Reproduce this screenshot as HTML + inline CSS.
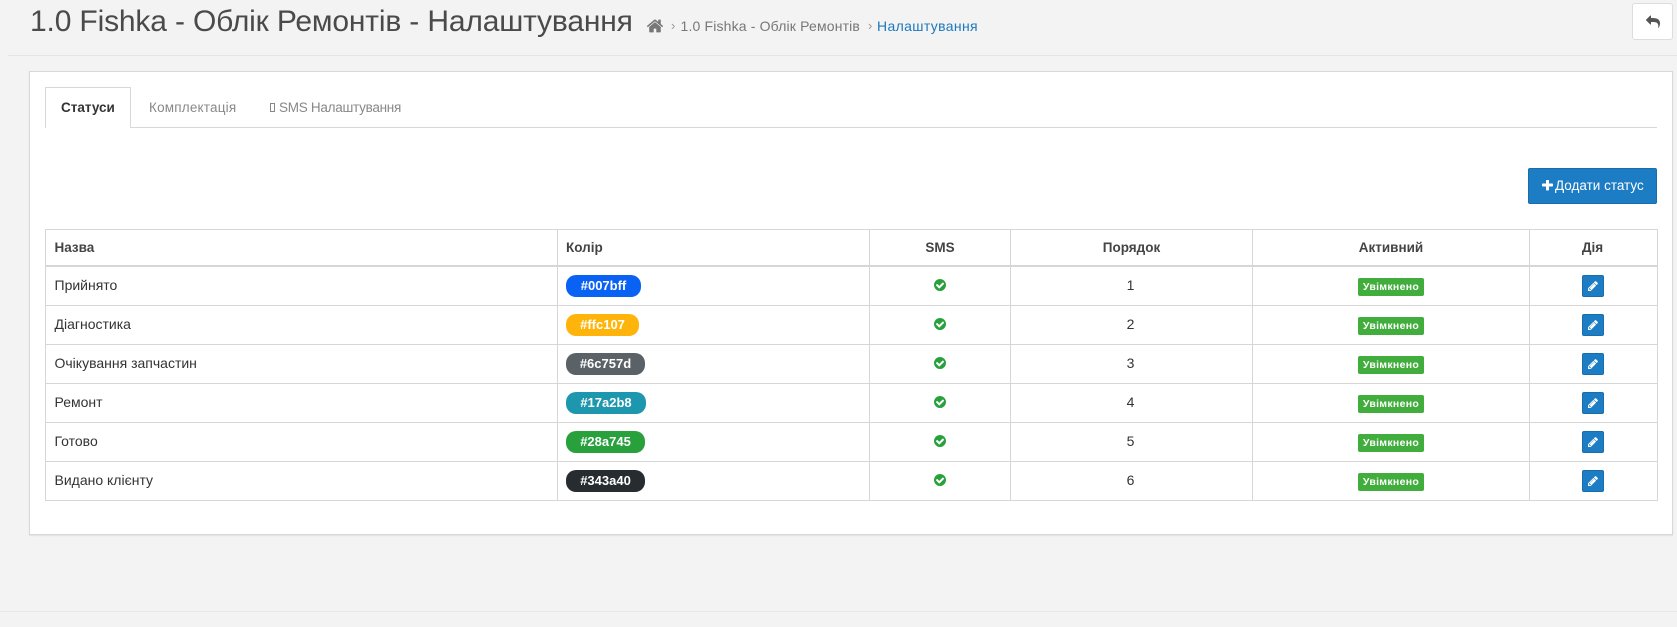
<!DOCTYPE html>
<html lang="uk"><head><meta charset="utf-8"><title>Налаштування</title>
<style>
*{box-sizing:border-box}
html,body{margin:0;padding:0}
body{width:1677px;height:627px;overflow:hidden;background:#f3f3f3;position:relative;font-family:"Liberation Sans","DejaVu Sans",sans-serif;color:#333;font-size:14px}
.a{position:absolute;white-space:nowrap}
.hl{position:absolute;left:8px;right:0;top:55px;height:1px;background:#e4e4e4}
.fl{position:absolute;left:0;right:0;top:611px;height:1px;background:#e8e8e8}
h1{margin:0;font-weight:400;font-size:30px;line-height:36px;left:30px;top:4px;color:#4a4a4a;letter-spacing:-.16px}
.bc{font-size:14px;line-height:18px;top:17px;color:#777}
.sep{color:#999;font-size:13px}
.back{left:1632px;top:3px;width:41px;height:37px;background:#fff;border:1px solid #ddd;border-radius:3px}
.card{left:29px;top:71px;width:1644px;height:464px;background:#fff;border:1px solid #d8d8d8;box-shadow:0 1px 1px rgba(0,0,0,.08)}
.tabline{left:45px;top:127px;width:1612px;height:1px;background:#d8d8d8}
.tab{left:45px;top:87px;width:86px;height:41px;background:#fff;border:1px solid #d8d8d8;border-bottom:0}
.tt{font-size:13.5px;line-height:18px;top:98.5px;color:#888}
.add{left:1528px;top:168px;width:129px;height:36px;background:#1c7cc4;border:1px solid #1a6dab;border-radius:2px;color:#fff;font-size:13.5px;line-height:34px;padding-left:26px}
table{position:absolute;left:45px;top:229px;width:1612px;border-collapse:collapse;table-layout:fixed;background:#fff}
th,td{border:1px solid #d6d6d6;padding:0 0 2px 8px;font-size:14px;text-align:left;height:39px;color:#333;white-space:nowrap}
td:first-child,th:first-child{padding-left:8.5px}
th,th.c{height:36px;font-size:13.5px;font-weight:700;border-bottom:2px solid #d6d6d6;color:#444;padding-bottom:0}
tr:nth-child(2) td{height:40px}
td.c,th.c{text-align:center;padding-left:0}
td.c{padding-bottom:2px}
td.n{padding-right:2px}
td.l,th.l{padding-right:2px}
.pill{display:inline-block;height:22px;line-height:21px;border-radius:10px;color:#fff;font-weight:700;font-size:13px;text-align:center;vertical-align:middle;position:relative;top:1px}
.badge{display:inline-block;width:66px;height:18px;line-height:18px;background:#41ad3c;color:#fff;font-weight:700;font-size:10.5px;border-radius:2px;letter-spacing:.3px;vertical-align:middle;position:relative;top:2px}
.btn{display:inline-flex;align-items:center;justify-content:center;width:22px;height:22px;background:#1c7cc4;border:1px solid #1a6dab;border-radius:2px;vertical-align:middle;position:relative;top:1px}
svg{display:block;fill:currentColor}
.ck{display:inline-block;color:#28a03c;vertical-align:middle;position:relative;top:-1px}
</style></head><body>
<svg width="0" height="0" style="position:absolute"><defs>
<symbol id="check" viewBox="128 128 1536 1536"><path d="M1412 734q0-28-18-46l-91-90q-19-19-45-19t-45 19l-408 407-226-226q-19-19-45-19t-45 19l-91 90q-18 18-18 46 0 27 18 45l362 362q19 19 45 19 27 0 46-19l543-543q18-18 18-45zm252 162q0 209-103 385.5t-279.5 279.5-385.5 103-385.5-103-279.5-279.5-103-385.5 103-385.5 279.5-279.5 385.5-103 385.5 103 279.5 279.5 103 385.5z"/></symbol>
<symbol id="pencil" viewBox="128 128 1536 1536"><path d="M491 1536l91-91-235-235-91 91v107h128v128h107zm523-928q0-22-22-22-10 0-17 7l-542 542q-7 7-7 17 0 22 22 22 10 0 17-7l542-542q7-7 7-17zm-54-192l416 416-832 832h-416v-416zm683 96q0 53-37 90l-166 166-416-416 166-165q36-38 90-38 53 0 91 38l235 234q37 39 37 91z"/></symbol>
</defs></svg>

<div class="hl"></div>
<h1 class="a">1.0 Fishka - Облік Ремонтів - Налаштування</h1>
<svg class="a" style="left:646px;top:17px;color:#777" width="18" height="18" viewBox="0 0 1792 1792"><path d="M1472 992v480q0 26-19 45t-45 19h-384v-384h-256v384h-384q-26 0-45-19t-19-45v-480q0-1 .5-3t.5-3l575-474 575 474q1 2 1 6zm223-69l-62 74q-8 9-21 11h-3q-13 0-21-7l-692-577-692 577q-12 8-24 7-13-2-21-11l-62-74q-8-10-7-23.500t11-21.500l719-599q32-26 76-26t76 26l244 204v-195q0-14 9-23t23-9h192q14 0 23 9t9 23v408l219 182q10 8 11 21.500t-7 23.500z"/></svg>
<span class="a bc sep" style="left:671px">›</span>
<span class="a bc" style="left:680.5px;letter-spacing:.16px">1.0 Fishka - Облік Ремонтів</span>
<span class="a bc sep" style="left:868px">›</span>
<span class="a bc" style="left:877px;color:#1c78be;letter-spacing:.35px">Налаштування</span>
<div class="a back"><svg class="a" style="left:13px;top:11px;color:#555" width="14" height="14" viewBox="0 0 1792 1792"><path d="M1792 1120q0 166-127 451-3 7-10.500 24t-13.500 30-13 22q-12 17-28 17-15 0-23.500-10t-8.500-25q0-9 2.500-26.500t2.500-23.500q5-68 5-123 0-101-17.500-181t-48.500-138.500-80-101-105.500-69.500-133-42.500-154-21.500-175.500-6h-224v256q0 26-19 45t-45 19-45-19l-512-512q-19-19-19-45t19-45l512-512q19-19 45-19t45 19 19 45v256h224q713 0 875 403 53 134 53 333z"/></svg></div>

<div class="a card"></div>
<div class="a tabline"></div>
<div class="a tab"></div>
<span class="a tt" style="left:61px;color:#333;font-weight:700">Статуси</span>
<span class="a tt" style="left:149px;letter-spacing:.2px">Комплектація</span>
<span class="a" style="left:270px;top:103px;width:5px;height:9px;border:1px solid #888"></span>
<span class="a tt" style="left:279px;letter-spacing:-.27px">SMS Налаштування</span>

<div class="a add">Додати статус<svg class="a" style="left:13px;top:11px;color:#fff" width="11" height="11" viewBox="192 192 1408 1408"><path d="M1600 736v192q0 40-28 68t-68 28h-416v416q0 40-28 68t-68 28h-192q-40 0-68-28t-28-68v-416h-416q-40 0-68-28t-28-68v-192q0-40 28-68t68-28h416v-416q0-40 28-68t68-28h192q40 0 68 28t28 68v416h416q40 0 68 28t28 68z"/></svg></div>

<table>
<colgroup><col style="width:512px"><col style="width:312px"><col style="width:141px"><col style="width:242px"><col style="width:277px"><col style="width:128px"></colgroup>
<tr><th>Назва</th><th>Колір</th><th class="c">SMS</th><th class="c">Порядок</th><th class="c">Активний</th><th class="c l">Дія</th></tr>
<tr><td>Прийнято</td><td><span class="pill" style="width:75px;background:#0a62f5">#007bff</span></td><td class="c"><span class="ck"><svg width="12" height="12"><use href="#check"/></svg></span></td><td class="c n">1</td><td class="c"><span class="badge">Увімкнено</span></td><td class="c l"><span class="btn"><svg width="10" height="10" style="color:#fff"><use href="#pencil"/></svg></span></td></tr>
<tr><td>Діагностика</td><td><span class="pill" style="width:73px;background:#ffb40c">#ffc107</span></td><td class="c"><span class="ck"><svg width="12" height="12"><use href="#check"/></svg></span></td><td class="c n">2</td><td class="c"><span class="badge">Увімкнено</span></td><td class="c l"><span class="btn"><svg width="10" height="10" style="color:#fff"><use href="#pencil"/></svg></span></td></tr>
<tr><td>Очікування запчастин</td><td><span class="pill" style="width:79px;background:#5a6268">#6c757d</span></td><td class="c"><span class="ck"><svg width="12" height="12"><use href="#check"/></svg></span></td><td class="c n">3</td><td class="c"><span class="badge">Увімкнено</span></td><td class="c l"><span class="btn"><svg width="10" height="10" style="color:#fff"><use href="#pencil"/></svg></span></td></tr>
<tr><td>Ремонт</td><td><span class="pill" style="width:80px;background:#1c97ad">#17a2b8</span></td><td class="c"><span class="ck"><svg width="12" height="12"><use href="#check"/></svg></span></td><td class="c n">4</td><td class="c"><span class="badge">Увімкнено</span></td><td class="c l"><span class="btn"><svg width="10" height="10" style="color:#fff"><use href="#pencil"/></svg></span></td></tr>
<tr><td>Готово</td><td><span class="pill" style="width:79px;background:#28a03c">#28a745</span></td><td class="c"><span class="ck"><svg width="12" height="12"><use href="#check"/></svg></span></td><td class="c n">5</td><td class="c"><span class="badge">Увімкнено</span></td><td class="c l"><span class="btn"><svg width="10" height="10" style="color:#fff"><use href="#pencil"/></svg></span></td></tr>
<tr><td>Видано клієнту</td><td><span class="pill" style="width:79px;background:#272c31">#343a40</span></td><td class="c"><span class="ck"><svg width="12" height="12"><use href="#check"/></svg></span></td><td class="c n">6</td><td class="c"><span class="badge">Увімкнено</span></td><td class="c l"><span class="btn"><svg width="10" height="10" style="color:#fff"><use href="#pencil"/></svg></span></td></tr>
</table>
<div class="fl"></div>
</body></html>
